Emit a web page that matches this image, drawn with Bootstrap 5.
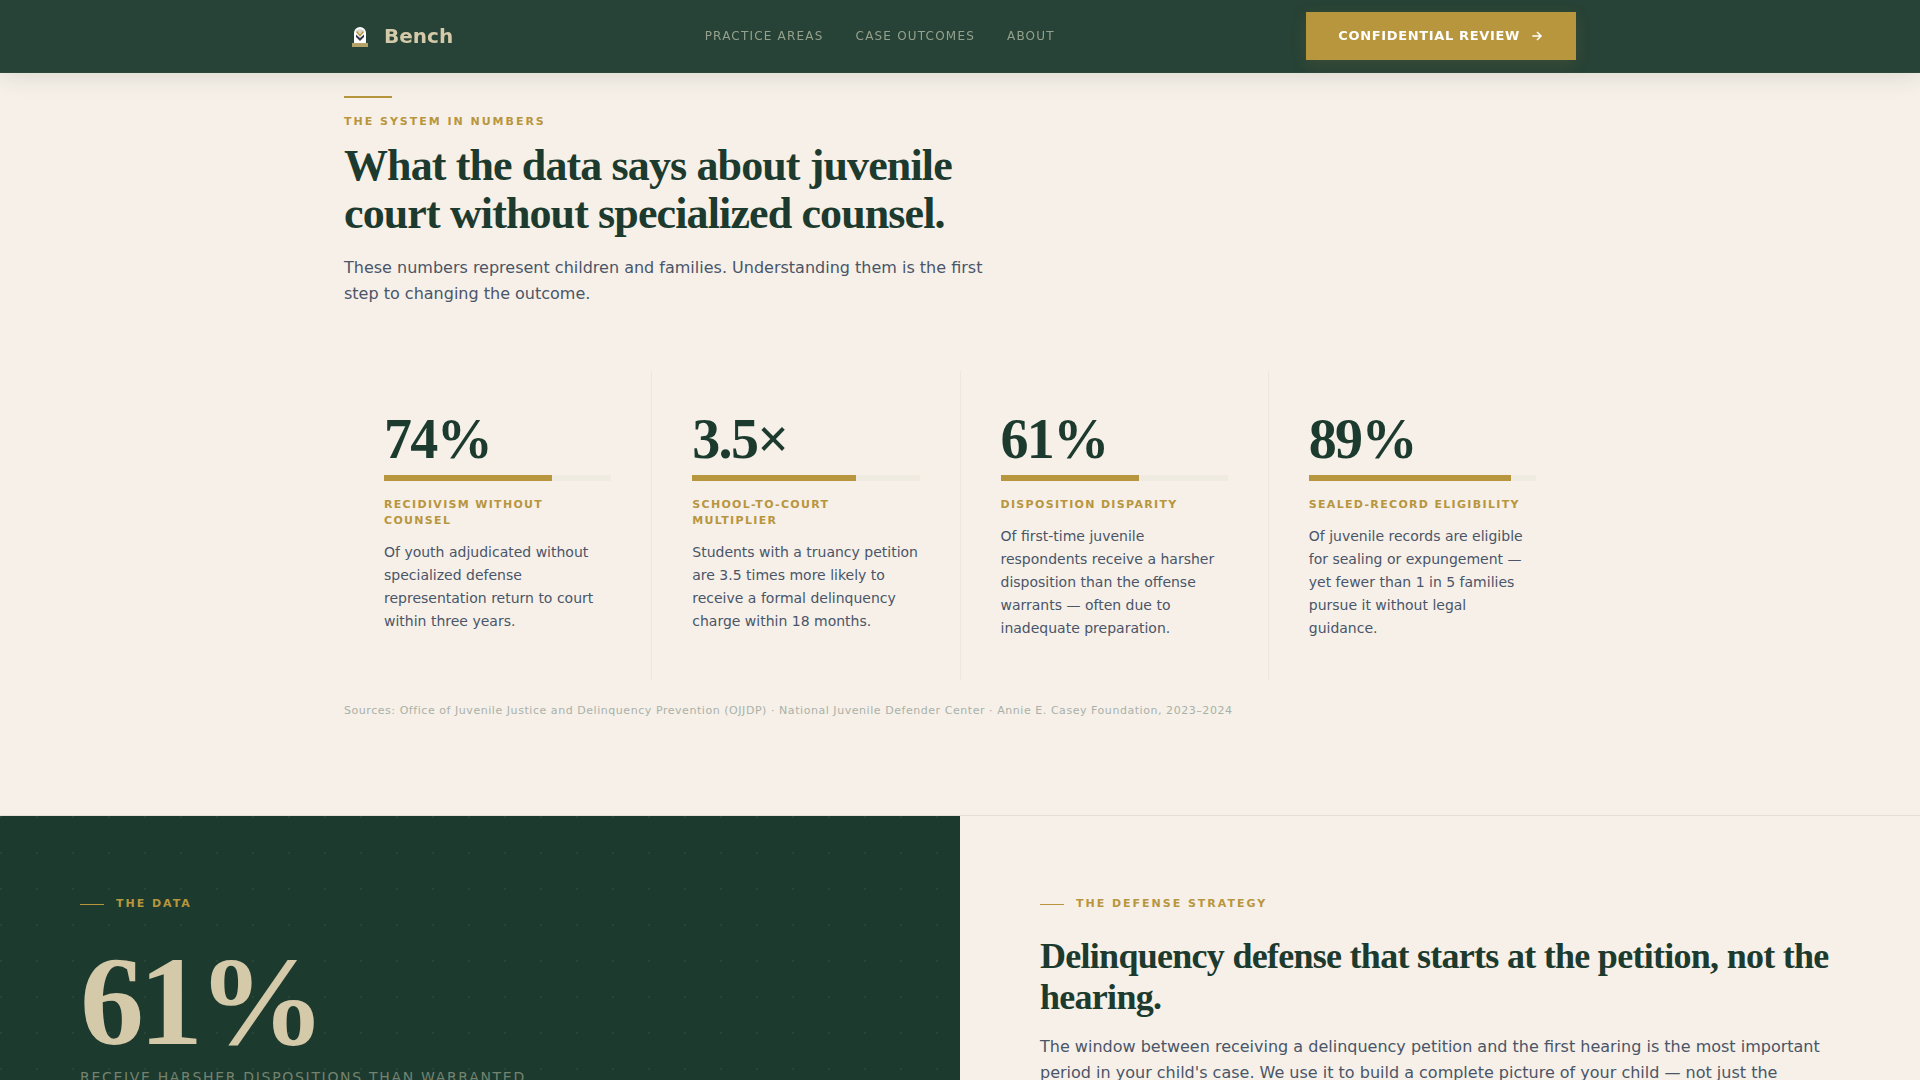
<!DOCTYPE html>
<html lang="en">
<head>
<meta charset="utf-8">
<meta name="viewport" content="width=device-width, initial-scale=1">
<title>Bench</title>
<link rel="stylesheet" href="https://cdn.jsdelivr.net/npm/bootstrap@5.3.0/dist/css/bootstrap.min.css">
<style>
  :root { --pine: #1c3a2e; --gold: #b8963e; --paper: #f6f0e8; --sand: #d4c9a8; --slate: #4a5568; }
  body { background: var(--paper); color: var(--slate); font-family: "DejaVu Sans", sans-serif; font-size: 16px; line-height: 26px; }
  .page-width { max-width: 1280px; padding-left: 24px; padding-right: 24px; }
  .site-nav { height: 72px; background: #274236; box-shadow: 0 1px 0 #2d473b, 0 4px 24px rgba(28, 58, 46, .12); }
  .brand-name { color: var(--sand); font-size: 20px; font-weight: 700; }
  .menu { gap: 32px; }
  .menu-link { color: #95a18c; font-size: 12px; letter-spacing: .1em; text-transform: uppercase; }
  .btn-review { --bs-btn-color: #fff; --bs-btn-bg: var(--gold); --bs-btn-hover-color: #fff; --bs-btn-hover-bg: #a5852f; --bs-btn-border-width: 0; --bs-btn-border-radius: 0;
    height: 48px; padding: 0 32px; gap: 10px; font-size: 13px; font-weight: 700; letter-spacing: .05em; text-transform: uppercase; box-shadow: 0 4px 16px rgba(184, 150, 62, .15); }
  .serif { font-family: "Liberation Serif", serif; font-weight: 700; color: var(--pine); }
  .rule { width: 48px; height: 2px; background: var(--gold); }
  .eyebrow { color: var(--gold); font-size: 11px; line-height: 16px; font-weight: 700; letter-spacing: .18em; text-transform: uppercase; }
  .dashed-in { gap: 12px; }
  .dashed-in::before { content: ""; width: 24px; height: 1px; background: currentColor; }
  .intro { max-width: 680px; margin-bottom: 64px; }
  .intro .eyebrow { margin-bottom: 12px; }
  .intro h2 { font-size: 44px; line-height: 48px; letter-spacing: -.02em; margin-bottom: 17px; }
  .intro p { max-width: 640px; }
  .numbers { border-bottom: 1px solid #e6dfd8; padding-bottom: 93px; }
  .stat-grid { grid-template-columns: repeat(4, 1fr); gap: 1px; background: #ece6df; }
  .stat { padding: 40px; background: var(--paper); }
  .figure-num { font-size: 56px; line-height: 56px; letter-spacing: -.03em; }
  .stat .progress { --bs-progress-height: 6px; --bs-progress-bg: #f0ebe1; --bs-progress-border-radius: 0; --bs-progress-bar-bg: var(--gold); }
  .stat-label { color: var(--gold); font-size: 11px; line-height: 16px; font-weight: 700; letter-spacing: .12em; text-transform: uppercase; margin-bottom: 12px; }
  .stat-text { font-size: 14px; line-height: 23px; }
  .sources { color: #a9b0a9; font-size: 11px; line-height: 22px; letter-spacing: .05em; margin-top: 20px; }
  .panel { padding: 80px; }
  .panel-dark { background: radial-gradient(circle at center, rgba(212, 201, 168, .07) 1px, transparent 1px) -17px -17px / 36px 36px var(--pine); }
  .panel-dark .eyebrow { margin-bottom: 32px; }
  .big-num { color: var(--sand); font-size: 128px; line-height: 115px; letter-spacing: -.04em; }
  .big-label { color: #748370; font-size: 14px; line-height: 20px; letter-spacing: .12em; text-transform: uppercase; }
  .panel h3 { font-size: 36px; line-height: 41px; letter-spacing: -.02em; }
</style>
<script src="https://cdn.jsdelivr.net/npm/bootstrap@5.3.0/dist/js/bootstrap.bundle.min.js" defer></script>
</head>
<body class="d-flex flex-column vh-100 overflow-hidden">

<nav class="site-nav sticky-top flex-shrink-0">
  <div class="container-fluid page-width h-100 d-flex align-items-center justify-content-between">
    <a class="d-flex align-items-center gap-2 text-decoration-none" href="#">
      <svg width="32" height="32" viewBox="0 0 32 32" aria-hidden="true">
        <path d="M10 24V13a6 6 0 0 1 12 0v11z" fill="#fff"/>
        <path d="M12 11c1-2.500 7-2.500 8 0l-4 3z" fill="#d8d6cb"/>
        <path d="M12.500 11.500l3.500 4 3.500-4" fill="none" stroke="#b8963e" stroke-width="1.500"/>
        <path d="M12 14.500v2.500l4 4 4-4v-2.500l-4 3.500z" fill="#33384a"/>
        <path d="M8 23h16v4H8z" fill="#b3a368"/>
      </svg>
      <span class="brand-name">Bench</span>
    </a>
    <div class="menu d-flex">
      <a class="menu-link text-decoration-none" href="#">Practice Areas</a>
      <a class="menu-link text-decoration-none" href="#">Case Outcomes</a>
      <a class="menu-link text-decoration-none" href="#">About</a>
    </div>
    <button type="button" class="btn btn-review d-inline-flex align-items-center">
      Confidential Review
      <svg width="14" height="14" viewBox="0 0 24 24" fill="none" stroke="currentColor" stroke-width="2.500" aria-hidden="true"><path d="M4 12h15M12 5l7 7-7 7"/></svg>
    </button>
  </div>
</nav>

<section class="numbers pt-4 flex-shrink-0">
  <div class="container-fluid page-width">
    <div class="intro">
      <div class="rule mb-3"></div>
      <div class="eyebrow">The System in Numbers</div>
      <h2 class="serif">What the data says about juvenile court without specialized counsel.</h2>
      <p class="mb-0">These numbers represent children and families. Understanding them is the first step to changing the outcome.</p>
    </div>

    <div class="stat-grid d-grid">
      <div class="stat">
        <div class="serif figure-num mb-2">74%</div>
        <div class="progress mb-3"><div class="progress-bar" style="width: 74%"></div></div>
        <div class="stat-label">Recidivism Without Counsel</div>
        <p class="stat-text mb-0">Of youth adjudicated without specialized defense representation return to court within three years.</p>
      </div>
      <div class="stat">
        <div class="serif figure-num mb-2">3.5×</div>
        <div class="progress mb-3"><div class="progress-bar" style="width: 72%"></div></div>
        <div class="stat-label">School-to-Court Multiplier</div>
        <p class="stat-text mb-0">Students with a truancy petition are 3.5 times more likely to receive a formal delinquency charge within 18 months.</p>
      </div>
      <div class="stat">
        <div class="serif figure-num mb-2">61%</div>
        <div class="progress mb-3"><div class="progress-bar" style="width: 61%"></div></div>
        <div class="stat-label">Disposition Disparity</div>
        <p class="stat-text mb-0">Of first-time juvenile respondents receive a harsher disposition than the offense warrants — often due to inadequate preparation.</p>
      </div>
      <div class="stat">
        <div class="serif figure-num mb-2">89%</div>
        <div class="progress mb-3"><div class="progress-bar" style="width: 89%"></div></div>
        <div class="stat-label">Sealed-Record Eligibility</div>
        <p class="stat-text mb-0">Of juvenile records are eligible for sealing or expungement — yet fewer than 1 in 5 families pursue it without legal guidance.</p>
      </div>
    </div>

    <p class="sources mb-0">Sources: Office of Juvenile Justice and Delinquency Prevention (OJJDP) · National Juvenile Defender Center · Annie E. Casey Foundation, 2023–2024</p>
  </div>
</section>

<section class="row g-0 flex-fill">
  <div class="col-6 panel panel-dark">
    <div class="eyebrow dashed-in d-flex align-items-center">The Data</div>
    <div class="serif big-num mb-2">61%</div>
    <div class="big-label">Receive harsher dispositions than warranted</div>
  </div>
  <div class="col-6 panel">
    <div class="eyebrow dashed-in d-flex align-items-center mb-4">The Defense Strategy</div>
    <h3 class="serif mb-3">Delinquency defense that starts at the petition, not the hearing.</h3>
    <p class="mb-0">The window between receiving a delinquency petition and the first hearing is the most important period in your child's case. We use it to build a complete picture of your child — not just the</p>
  </div>
</section>

</body>
</html>
